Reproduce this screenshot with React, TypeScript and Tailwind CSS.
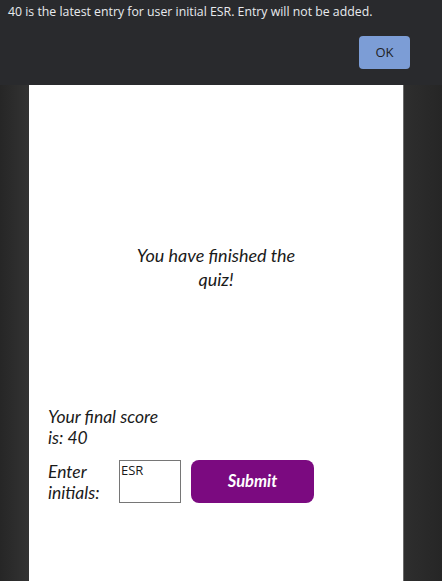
import React from "react";

const quizFont = { fontFamily: "Lato, 'Open Sans', sans-serif" };

export default function App() {
  return (
    <div className="flex h-[581px] w-[442px] flex-col overflow-hidden bg-[#262626]">
      {/* Alert dialog */}
      <div
        className="flex h-[85px] shrink-0 flex-col bg-[#292a2d] px-[8px] pt-[3px] text-[12.3px] text-[#e8eaed] shadow-[0_2px_4px_rgba(0,0,0,0.6)]"
        style={{ fontFamily: "'Open Sans', 'Noto Sans', sans-serif" }}
      >
        <p className="leading-[18px]">
          40 is the latest entry for user initial ESR. Entry will not be added.
        </p>
        <div className="mt-[15px] flex justify-end pr-[24px]">
          <button className="h-[33px] w-[51px] rounded-[4px] bg-[#7c9dd6] text-[13px] text-[#202124]">
            OK
          </button>
        </div>
      </div>

      {/* Page behind */}
      <div className="flex flex-1">
        <div className="w-[29px] shrink-0 bg-gradient-to-r from-[#262626] to-[#333333]" />
        <main
          className="flex flex-1 flex-col border-r border-[#6b6b6b] bg-white text-[#1a1a1a]"
          style={quizFont}
        >
          <h2 className="mx-auto mt-[158px] w-[180px] text-center text-[18px] italic leading-[24px]">
            You have finished the quiz!
          </h2>
          <div className="pl-[19px]">
            <p className="mt-[115px] w-[125px] text-[17.5px] italic leading-[21px]">
              Your final score is: 40
            </p>
            <div className="mt-[12px] flex items-start">
              <label className="mt-[1px] w-[71px] text-[17.5px] italic leading-[21px]">
                Enter initials:
              </label>
              <input
                defaultValue="ESR"
                className="h-[43px] w-[62px] border border-[#767676] px-[1px] pb-[24px] text-[13px] leading-none outline-none"
                style={{ fontFamily: "'Open Sans', sans-serif" }}
              />
              <button className="ml-[10px] h-[43px] w-[123px] rounded-[8px] bg-[#7b0a80] text-[16.5px] font-bold italic text-white">
                Submit
              </button>
            </div>
          </div>
        </main>
        <div className="w-[38px] shrink-0 bg-gradient-to-l from-[#262626] to-[#2e2e2e]" />
      </div>
    </div>
  );
}
